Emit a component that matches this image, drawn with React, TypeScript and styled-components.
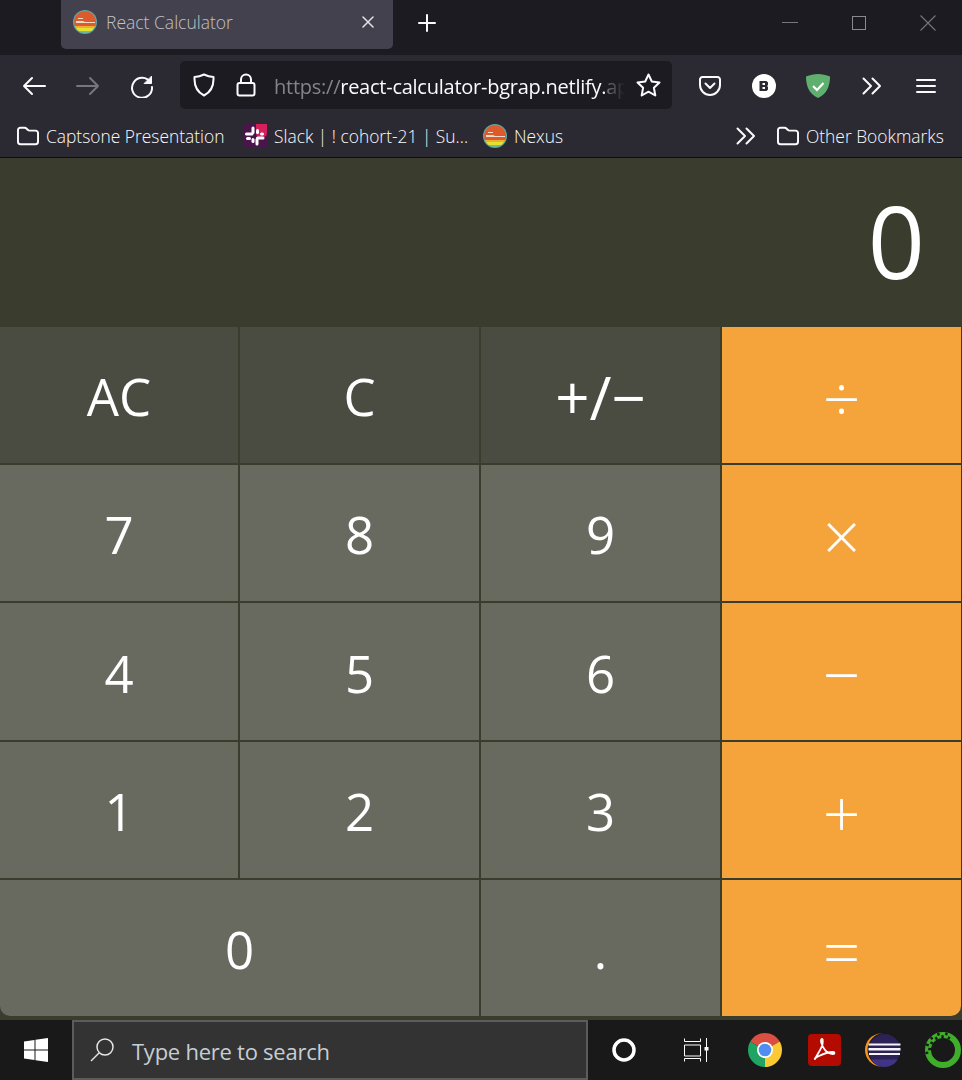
import React from "react";
import styled, { createGlobalStyle } from "styled-components";

const Global = createGlobalStyle`
  html, body { margin: 0; padding: 0; background: #191919; }
  #root { width: 962px; height: 1080px; overflow: hidden; }
  * { box-sizing: border-box; }
`;

const Page = styled.div`
  width: 962px;
  height: 1080px;
  display: flex;
  flex-direction: column;
  font-family: "Open Sans", "Noto Sans", "Liberation Sans", sans-serif;
`;

/* ---------- browser chrome ---------- */
const TabBar = styled.div`
  height: 55px;
  background: #1c1b22;
  display: flex;
  align-items: flex-start;
  padding-left: 61px;
`;
const Tab = styled.div`
  width: 332px;
  height: 49px;
  background: #42414d;
  border-radius: 0 0 5px 5px;
  display: flex;
  align-items: center;
  padding: 0 19px 5px 12px;
  color: #c2c1c6;
  font-size: 17.5px;
  font-weight: 300;
`;
const TabTitle = styled.span`
  margin-left: 9px;
  flex: 1;
  white-space: nowrap;
`;
const NewTab = styled.div`
  width: 68px;
  height: 46px;
  display: flex;
  align-items: center;
  justify-content: center;
`;
const WindowControls = styled.div`
  margin-left: auto;
  display: flex;
`;
const WindowButton = styled.div`
  width: 69px;
  height: 45px;
  display: flex;
  align-items: center;
  justify-content: center;
`;
const Toolbar = styled.div`
  height: 65px;
  background: #2b2a33;
  display: flex;
  align-items: center;
  padding: 0 0 5px 7px;
`;
const ToolButton = styled.div`
  width: 54px;
  height: 48px;
  padding-top: 1px;
  display: flex;
  align-items: center;
  justify-content: center;
`;
const UrlBar = styled.div`
  width: 492px;
  height: 48px;
  margin: 0 11px;
  background: #1c1b22;
  border-radius: 5px;
  display: flex;
  align-items: center;
  padding-left: 12px;
`;
const UrlIcon = styled.div`
  width: 24px;
  height: 24px;
  margin-right: ${(p: { $mr: number }) => p.$mr}px;
  flex: none;
  display: flex;
  align-items: center;
  justify-content: center;
`;
const UrlText = styled.div`
  width: 351px;
  overflow: hidden;
  white-space: nowrap;
  font-size: 20px;
  font-weight: 400;
  color: #fbfbfe;
  letter-spacing: -0.25px;
  padding-top: 3px;
  -webkit-mask-image: linear-gradient(to right, #000 94%, transparent 100%);
  mask-image: linear-gradient(to right, #000 94%, transparent 100%);
`;
const Dim = styled.span`
  color: #85848b;
`;
const StarSlot = styled.div`
  margin-left: auto;
  margin-right: 11px;
  width: 26px;
  height: 26px;
  display: flex;
  align-items: center;
  justify-content: center;
`;
const BookmarksBar = styled.div`
  height: 38px;
  background: #2b2a33;
  border-bottom: 1px solid #0c0c0d;
  display: flex;
  align-items: center;
  padding: 0 0 5px 17px;
  color: #fbfbfe;
  font-size: 17.4px;
  font-weight: 300;
`;
const Bookmark = styled.div`
  display: flex;
  align-items: center;
  white-space: nowrap;
  margin-right: ${(p: { $mr: number }) => p.$mr}px;
  gap: 7px;
`;
const BookmarkLabel = styled.span`
  width: ${(p: { $w: number }) => p.$w}px;
  white-space: nowrap;
`;
const Chevrons = styled.div`
  margin-left: auto;
  margin-right: 21px;
  display: flex;
`;

/* ---------- calculator ---------- */
const Calculator = styled.main`
  height: 862px;
  background: #3a3c2e;
  display: flex;
  flex-direction: column;
  padding-bottom: 4px;
`;
const Display = styled.div`
  height: 169px;
  display: flex;
  align-items: center;
  justify-content: flex-end;
  padding: 0 37px 5px 0;
  color: #fff;
  font-size: 100px;
  font-weight: 400;
  line-height: 1;
`;
const Keys = styled.div`
  flex: 1;
  display: grid;
  grid-template-columns: 238px 239px 239px 239px;
  grid-template-rows: 136px 136px 137px 136px 136px;
  gap: 2px;
  padding-right: 1px;
`;
type KeyKind = "fn" | "num" | "op";
const KEY_BG: Record<KeyKind, string> = {
  fn: "#4b4c41",
  num: "#696a5f",
  op: "#f5a33b",
};
const Key = styled.button<{ $kind: KeyKind; $span?: number; $corner?: "l" | "r"; $size?: number }>`
  appearance: none;
  border: 0;
  padding: 3px 0 0;
  margin: 0;
  background: ${(p) => KEY_BG[p.$kind]};
  color: #fff;
  font-family: inherit;
  font-size: ${(p) => p.$size ?? (p.$kind === "op" ? 66 : 51)}px;
  font-weight: ${(p) => (p.$kind === "op" ? 300 : 400)};
  line-height: 1;
  display: flex;
  align-items: center;
  justify-content: center;
  grid-column: span ${(p) => p.$span ?? 1};
  border-bottom-left-radius: ${(p) => (p.$corner === "l" ? "10px" : "0")};
  border-bottom-right-radius: ${(p) => (p.$corner === "r" ? "10px" : "0")};
`;

/* ---------- taskbar ---------- */
const Taskbar = styled.footer`
  height: 60px;
  background: #191919;
  display: flex;
  align-items: stretch;
`;
const StartButton = styled.div`
  width: 72px;
  display: flex;
  align-items: center;
  justify-content: center;
`;
const SearchBox = styled.div`
  width: 516px;
  background: #333333;
  border: 2px solid #5c5c5c;
  display: flex;
  align-items: center;
  padding-left: 15px;
  color: #c6ced4;
  font-size: 22px;
`;
const SearchText = styled.span`
  margin: 2px 0 0 17px;
  letter-spacing: -0.25px;
`;
const TaskSlot = styled.div<{ $w: number; $pl?: number }>`
  width: ${(p) => p.$w}px;
  padding-left: ${(p) => p.$pl ?? 0}px;
  display: flex;
  align-items: center;
  justify-content: center;
  flex: none;
`;

/* ---------- icons ---------- */
const stroke = { fill: "none", stroke: "#fbfbfe", strokeWidth: 2, strokeLinecap: "round", strokeLinejoin: "round" } as const;

const Favicon = ({ id }: { id: string }) => (
  <svg width="24" height="24" viewBox="0 0 24 24">
    <defs>
      <clipPath id={id}>
        <circle cx="12" cy="12" r="10.800" />
      </clipPath>
    </defs>
    <circle cx="12" cy="12" r="12" fill="#5fa7a3" />
    <g clipPath={`url(#${id})`}>
      <rect width="24" height="16" fill="#dc5a2c" />
      <rect y="16" width="24" height="2" fill="#ebb02f" />
      <rect y="18" width="24" height="3" fill="#e6e02e" />
      <rect y="21" width="24" height="3" fill="#6fbf9e" />
      <path d="M3 11h7l2 1h10v1H3z" fill="#f3d9c8" />
      <path d="M5 8h5v1H5z" fill="#f3d9c8" />
    </g>
  </svg>
);
const Folder = () => (
  <svg width="22" height="20" viewBox="0 0 22.500 20" {...stroke}>
    <path d="M1 4a2.500 2.500 0 0 1 2.500-2.500h4.200c1 0 1.500.4 2.200 1.100l1 1c.6.6 1 .9 2 .9h6.100A2.500 2.500 0 0 1 21.500 7v9a2.500 2.500 0 0 1-2.500 2.500H3.500A2.500 2.500 0 0 1 1 16z" />
  </svg>
);
const DoubleChevron = () => (
  <svg width="20" height="18" viewBox="0 0 20 18" {...stroke}>
    <path d="M1.500 1.500 9 9l-7.500 7.500M10.500 1.500 18 9l-7.500 7.500" />
  </svg>
);

const Slack = () => (
  <svg width="24" height="24" viewBox="0 0 24 24">
    <rect width="24" height="24" fill="#4a154b" />
    <path d="M13 0h11v9a4 4 0 0 1-4 4h-3a4 4 0 0 1-4-4z" fill="#d61f5c" />
    <g fill="#fff">
      <rect x="2" y="8.500" width="8.500" height="3" rx="1.500" />
      <rect x="13" y="12.500" width="8.500" height="3" rx="1.500" />
      <rect x="8.500" y="2.500" width="3" height="7.500" rx="1.500" />
      <rect x="12.500" y="14" width="3" height="7.500" rx="1.500" />
      <rect x="13" y="5" width="3" height="5" rx="1.500" />
      <rect x="8.500" y="14" width="3" height="5" rx="1.500" />
      <rect x="3" y="13" width="5" height="3" rx="1.500" />
      <rect x="17" y="8.500" width="4" height="3" rx="1.500" />
    </g>
  </svg>
);

const Chrome = () => (
  <svg width="34" height="34" viewBox="0 0 34 34">
    <path d="M17 17 2.300 8.500A17 17 0 0 1 31.700 8.500z" fill="#db4f43" />
    <path d="M17 17 17 34A17 17 0 0 1 2.300 8.500z" fill="#1fa463" />
    <path d="M17 17 31.700 8.500A17 17 0 0 1 17 34z" fill="#fcc934" />
    <circle cx="17" cy="17" r="8" fill="#fff" />
    <circle cx="17" cy="17" r="6.300" fill="#4f8ef0" />
  </svg>
);
const Acrobat = () => (
  <svg width="33" height="32" viewBox="0 0 33 32">
    <rect width="33" height="32" rx="4" fill="#b30b00" />
    <path
      d="M7 25c2-4 5-8 7-13 1-3 1-7 0-7-2 0-1 6 3 11 2 2.500 5 4 8 4 2 0 2-2 0-2-4 0-10 2-14 4-3 1.500-5 3-4 3z"
      fill="none"
      stroke="#fff"
      strokeWidth="1.800"
      strokeLinejoin="round"
    />
  </svg>
);
const Eclipse = () => (
  <svg width="36" height="34" viewBox="0 0 36 34">
    <circle cx="16.500" cy="17" r="16.500" fill="#f7941e" />
    <circle cx="19.500" cy="17" r="17" fill="#191919" />
    <circle cx="19.500" cy="17" r="16" fill="#2c2255" />
    <path d="M6 26.500h27a16 16 0 0 1-27 0z" fill="#3f3485" />
    <g fill="#f4f4fa">
      <rect x="3.500" y="10.500" width="32" height="2" />
      <rect x="3.500" y="15" width="32" height="2.500" />
      <rect x="4" y="20" width="31" height="2" />
    </g>
  </svg>
);
const RING_CUTS = [170, 184, 198, 212, 226, 240, 254, 268, 282, 296];
const GreenRing = () => (
  <svg width="36" height="36" viewBox="0 0 36 36">
    <circle cx="18" cy="18" r="15" fill="none" stroke="#3fae2a" strokeWidth="6" />
    {RING_CUTS.map((a, i) => (
      <rect
        key={a}
        x={i % 2 ? 30 : 33}
        y="16.800"
        width="2.800"
        height="2.400"
        fill="#191919"
        transform={`rotate(${a} 18 18)`}
      />
    ))}
  </svg>
);

export default function App() {
  return (
    <Page>
      <Global />
      <TabBar>
        <Tab>
          <Favicon id="fav-tab" />
          <TabTitle>React Calculator</TabTitle>
          <svg width="12" height="12" viewBox="0 0 12 12" fill="none" stroke="#e4e4e7" strokeWidth="1.500" strokeLinecap="round">
            <path d="M1 1l10 10M11 1 1 11" />
          </svg>
        </Tab>
        <NewTab>
          <svg width="18" height="18" viewBox="0 0 18 18" fill="none" stroke="#fbfbfe" strokeWidth="2" strokeLinecap="round">
            <path d="M9 1v16M1 9h16" />
          </svg>
        </NewTab>
        <WindowControls>
          <WindowButton>
            <svg width="16" height="2" viewBox="0 0 16 2">
              <rect width="16" height="1" fill="#77767c" />
            </svg>
          </WindowButton>
          <WindowButton>
            <svg width="14" height="14" viewBox="0 0 14 14" fill="none" stroke="#8a898f">
              <rect x=".5" y=".5" width="13" height="13" />
            </svg>
          </WindowButton>
          <WindowButton>
            <svg width="16" height="16" viewBox="0 0 16 16" fill="none" stroke="#77767c" strokeWidth="1.100">
              <path d="M.5.5l15 15M15.500.5l-15 15" />
            </svg>
          </WindowButton>
        </WindowControls>
      </TabBar>

      <Toolbar>
        <ToolButton>
          <svg width="24" height="20" viewBox="0 0 24 20" {...stroke}>
            <path d="M23 10H2M10 2l-8 8 8 8" />
          </svg>
        </ToolButton>
        <ToolButton>
          <svg width="24" height="20" viewBox="0 0 24 20" {...stroke} stroke="#77767c">
            <path d="M1 10h21M14 2l8 8-8 8" />
          </svg>
        </ToolButton>
        <ToolButton>
          <svg width="24" height="24" viewBox="0 0 24 24" {...stroke}>
            <path d="M20.500 8.500A10 10 0 1 0 22 13" />
            <path d="M21.500 2.500v7h-7z" fill="#fbfbfe" strokeWidth="1" />
          </svg>
        </ToolButton>
        <UrlBar>
          <UrlIcon $mr={18}>
            <svg width="22" height="24" viewBox="0 0 22 24" {...stroke}>
              <path d="M11 1.500c3 1.500 6 2.300 9.500 2.500.4 8-1.500 14.500-9.500 18.500C3 18.500 1.100 12 1.500 4 5 3.800 8 3 11 1.500z" />
            </svg>
          </UrlIcon>
          <UrlIcon $mr={16}>
            <svg width="20" height="24" viewBox="0 0 20 24" {...stroke}>
              <rect x="1.500" y="10" width="17" height="12.500" rx="2" />
              <path d="M5 10V6.500a5 5 0 0 1 10 0V10" />
            </svg>
          </UrlIcon>
          <UrlText>
            <Dim>https://</Dim>react-calculator-bgrap.netlify.<Dim>app</Dim>
          </UrlText>
          <StarSlot>
            <svg width="25" height="24" viewBox="0 0 25 24" {...stroke}>
              <path d="M12.500 1.500l3.300 7 7.700 1-5.600 5.300 1.400 7.700-6.800-3.800-6.800 3.800 1.400-7.700L1.500 9.500l7.700-1z" />
            </svg>
          </StarSlot>
        </UrlBar>
        <ToolButton>
          <svg width="22" height="20" viewBox="0 0 22 20" {...stroke}>
            <path d="M3.500 1h15A2.500 2.500 0 0 1 21 3.500V9a10 10 0 0 1-20 0V3.500A2.500 2.500 0 0 1 3.500 1z" />
            <path d="M6.500 7.500 11 12l4.500-4.500" />
          </svg>
        </ToolButton>
        <ToolButton>
          <svg width="24" height="24" viewBox="0 0 24 24">
            <circle cx="12" cy="12" r="12" fill="#fff" />
            <path
              fillRule="evenodd"
              d="M7.500 7h7l1.500 1.500v2.500l-1 1 1 1v2.500L14.500 17h-7zM10.500 9v2h2.500V9zm0 4v2h2.500v-2z"
              fill="#2b2a33"
            />
          </svg>
        </ToolButton>
        <ToolButton>
          <svg width="24" height="24" viewBox="0 0 24 24">
            <path d="M12 0c4 0 8 1 12 2.500C24 12 21 20 12 24 3 20 0 12 0 2.500 4 1 8 0 12 0z" fill="#5fb06f" />
            <path d="M7 12l4 4 6.500-7" fill="none" stroke="#fff" strokeWidth="2.200" />
          </svg>
        </ToolButton>
        <ToolButton>
          <DoubleChevron />
        </ToolButton>
        <ToolButton>
          <svg width="20" height="16" viewBox="0 0 20 16" fill="none" stroke="#fbfbfe" strokeWidth="2" strokeLinecap="round">
            <path d="M1 2h18M1 8h18M1 14h18" />
          </svg>
        </ToolButton>
      </Toolbar>

      <BookmarksBar>
        <Bookmark $mr={18}>
          <Folder />
          <BookmarkLabel $w={179}>Captsone Presentation</BookmarkLabel>
        </Bookmark>
        <Bookmark $mr={16}>
          <Slack />
          <BookmarkLabel $w={193}>Slack | ! cohort-21 | Su...</BookmarkLabel>
        </Bookmark>
        <Bookmark $mr={0}>
          <Favicon id="fav-nexus" />
          <BookmarkLabel $w={50}>Nexus</BookmarkLabel>
        </Bookmark>
        <Chevrons>
          <DoubleChevron />
        </Chevrons>
        <Bookmark $mr={17}>
          <Folder />
          <BookmarkLabel $w={139}>Other Bookmarks</BookmarkLabel>
        </Bookmark>
      </BookmarksBar>

      <Calculator>
        <Display>0</Display>
        <Keys>
          <Key $kind="fn">AC</Key>
          <Key $kind="fn">C</Key>
          <Key $kind="fn" $size={60}>+/−</Key>
          <Key $kind="op">÷</Key>
          <Key $kind="num">7</Key>
          <Key $kind="num">8</Key>
          <Key $kind="num">9</Key>
          <Key $kind="op">×</Key>
          <Key $kind="num">4</Key>
          <Key $kind="num">5</Key>
          <Key $kind="num">6</Key>
          <Key $kind="op">−</Key>
          <Key $kind="num">1</Key>
          <Key $kind="num">2</Key>
          <Key $kind="num">3</Key>
          <Key $kind="op">+</Key>
          <Key $kind="num" $span={2} $corner="l">0</Key>
          <Key $kind="num">.</Key>
          <Key $kind="op" $corner="r">=</Key>
        </Keys>
      </Calculator>

      <Taskbar>
        <StartButton>
          <svg width="24" height="24" viewBox="0 0 24 24" fill="#fff">
            <path d="M0 3.500 10.500 2v9.500H0zM11.500 1.800 24 0v11.500H11.500zM0 12.500h10.500V22L0 20.500zM11.500 12.500H24V24l-12.500-1.800z" />
          </svg>
        </StartButton>
        <SearchBox>
          <svg width="26" height="26" viewBox="0 0 26 26" fill="none" stroke="#e6e6e6" strokeWidth="1.500">
            <circle cx="16" cy="10" r="8" />
            <path d="M10 16 2 24" />
          </svg>
          <SearchText>Type here to search</SearchText>
        </SearchBox>
        <TaskSlot $w={72}>
          <svg width="24" height="24" viewBox="0 0 24 24">
            <circle cx="12" cy="12" r="10" fill="none" stroke="#fff" strokeWidth="3.500" />
          </svg>
        </TaskSlot>
        <TaskSlot $w={72}>
          <svg width="25" height="24" viewBox="0 0 25 24" fill="none" stroke="#fff" strokeWidth="1">
            <path d="M.5 3.500v-3M.5 3.500h16v-3M.5 7h16v11H.5zM.5 23.500v-3h16v3M22.500 0v24" />
            <rect x="20.500" y="9" width="4" height="3.500" fill="#fff" stroke="none" />
          </svg>
        </TaskSlot>
        <TaskSlot $w={66}>
          <Chrome />
        </TaskSlot>
        <TaskSlot $w={52}>
          <Acrobat />
        </TaskSlot>
        <TaskSlot $w={65}>
          <Eclipse />
        </TaskSlot>
        <TaskSlot $w={47} $pl={9}>
          <GreenRing />
        </TaskSlot>
      </Taskbar>
    </Page>
  );
}
